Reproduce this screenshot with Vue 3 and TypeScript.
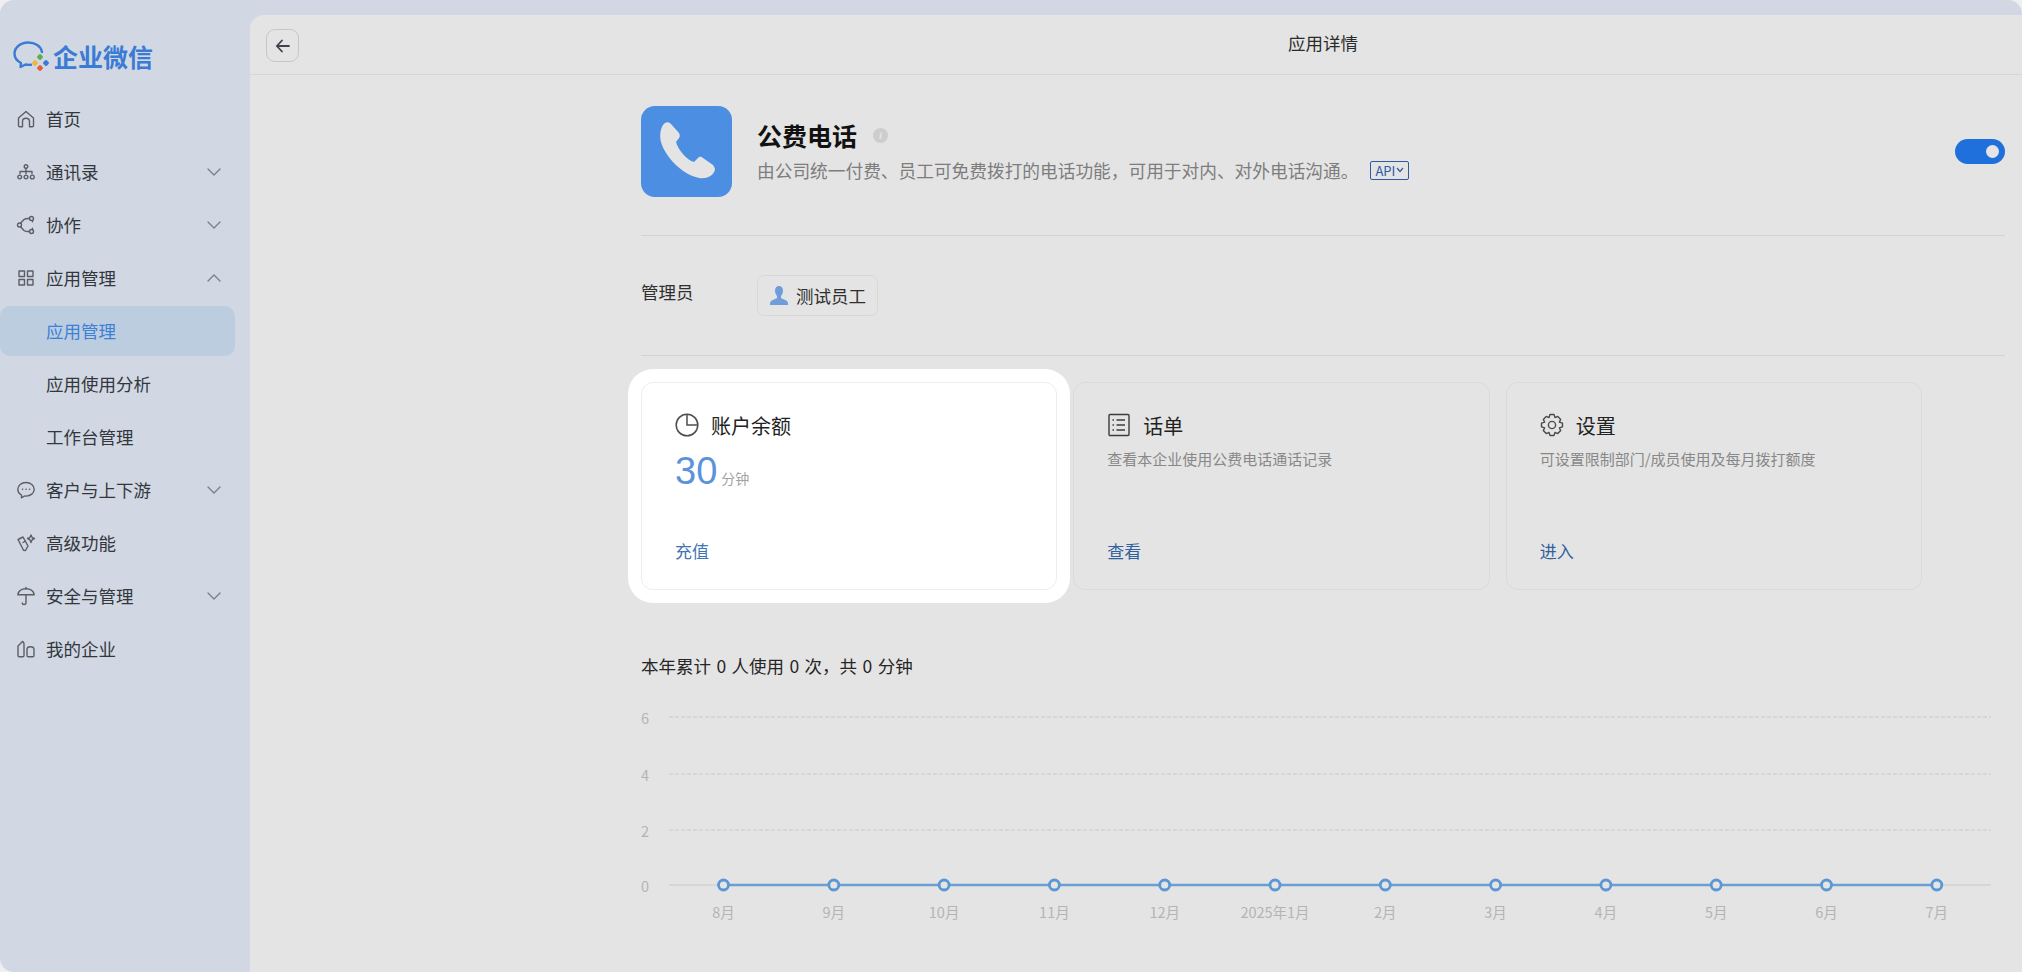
<template>
  <div class="shell">
    <aside class="sidebar">
      <div class="logo">
        <svg class="logo-icon" width="36" height="30" viewBox="0 0 36 30" fill="none">
          <path d="M29 11C28 5 22 1.500 15 1.500C7.500 1.500 1.500 6.500 1.500 12.500C1.500 16.500 4 20 8 22L7.500 26L12.500 23.500C14 23.800 16 24 18 23.800" stroke="#3a7bd5" stroke-width="2.400" stroke-linecap="round" stroke-linejoin="round" />
          <rect x="24.500" y="13.500" width="5" height="5" rx="1.500" transform="rotate(45 27 16)" fill="#5cb04a" />
          <rect x="19.500" y="19.500" width="5" height="5" rx="1.500" transform="rotate(45 22 22)" fill="#e9b93c" />
          <rect x="24.500" y="24.500" width="5" height="5" rx="1.500" transform="rotate(45 27 27)" fill="#dd6433" />
          <rect x="30.500" y="19.500" width="5" height="5" rx="1.500" transform="rotate(45 33 22)" fill="#3a7bd5" />
        </svg>
        <span class="logo-text">企业微信</span>
      </div>
      <nav>
        <div
          v-for="item in navItems"
          :key="item.label"
          class="nav-item"
          :class="{ active: item.active, sub: item.sub }"
        >
          <svg v-if="item.icon" class="nav-icon" width="20" height="20" viewBox="0 0 20 20" fill="none" stroke="#5a5f66" stroke-width="1.400" stroke-linejoin="round" stroke-linecap="round">
            <path v-for="d in icons[item.icon]" :key="d" :d="d" />
          </svg>
          <span class="nav-label">{{ item.label }}</span>
          <svg v-if="item.arrow" class="chevron" width="16" height="10" viewBox="0 0 16 10" fill="none" stroke="#7b8189" stroke-width="1.400" stroke-linecap="round" stroke-linejoin="round">
            <path :d="item.arrow === 'up' ? 'M2 8L8 2L14 8' : 'M2 2L8 8L14 2'" />
          </svg>
        </div>
      </nav>
    </aside>

    <main class="main">
      <header class="topbar">
        <button class="back" type="button">
          <svg width="16" height="14" viewBox="0 0 16 14" fill="none" stroke="#3f444b" stroke-width="1.800" stroke-linecap="round" stroke-linejoin="round">
            <path d="M14 7H2M7 1.500L1.800 7L7 12.500" />
          </svg>
        </button>
        <span class="topbar-title">应用详情</span>
      </header>

      <div class="content">
        <section class="app-head">
          <div class="app-logo">
            <svg width="91" height="91" viewBox="0 0 91 91">
              <path fill="#e4e4e4" d="M24 17C20 20 18 28 20 36C24 50 40 68 58 72C66 73 72 70 74 64C74 62 73 60 72 59L62 52C60 50 58 51 57 52L53 56C46 54 37 44 35 36L38 32C39 31 39 29 38 27L30 18C28 16 26 16 24 17Z" />
            </svg>
          </div>
          <div class="app-info">
            <div class="app-name">
              <span>公费电话</span>
              <i class="info-dot">i</i>
            </div>
            <div class="app-desc">
              <span>由公司统一付费、员工可免费拨打的电话功能，可用于对内、对外电话沟通。</span>
              <span class="api-tag">
                API
                <svg width="8" height="6" viewBox="0 0 8 6" fill="none" stroke="#2d5ca0" stroke-width="1.200"><path d="M1 1L4 4.500L7 1" /></svg>
              </span>
            </div>
          </div>
          <div class="switch"><span class="knob"></span></div>
        </section>

        <section class="admin">
          <span class="admin-label">管理员</span>
          <div class="admin-tag">
            <svg width="20" height="19" viewBox="0 0 20 19" fill="#6f9ddb">
              <path d="M10 0C7.500 0 6 2 6 4.500C6 7 7 9 8 10V12C6 13.500 1 14 1 17.500V19H19V17.500C19 14 14 13.500 12 12V10C13 9 14 7 14 4.500C14 2 12.500 0 10 0Z" />
            </svg>
            <span>测试员工</span>
          </div>
        </section>

        <section class="cards">
          <article class="card highlight">
            <div class="card-title">
              <svg width="24" height="24" viewBox="0 0 24 24" fill="none" stroke="#4d4d4d" stroke-width="1.500">
                <circle cx="12" cy="12" r="10.800" />
                <path d="M12 1.500V12H22.500" />
              </svg>
              <span>账户余额</span>
            </div>
            <div class="balance"><span class="balance-num">30</span><span class="balance-unit">分钟</span></div>
            <a class="card-action">充值</a>
          </article>
          <article class="card">
            <div class="card-title">
              <svg width="24" height="24" viewBox="0 0 24 24" fill="none" stroke="#3c3c3c" stroke-width="1.400">
                <rect x="2" y="1.500" width="20" height="21" rx="1" />
                <path d="M9.500 7H18M9.500 12H18M9.500 17H18" />
                <path d="M5.500 7H7M5.500 12H7M5.500 17H7" stroke-width="1.600" />
              </svg>
              <span>话单</span>
            </div>
            <p class="card-desc">查看本企业使用公费电话通话记录</p>
            <a class="card-action">查看</a>
          </article>
          <article class="card">
            <div class="card-title">
              <svg width="24" height="24" viewBox="0 0 24 24" fill="none" stroke="#4a4a4a" stroke-width="1.400" stroke-linejoin="round">
                <path d="M10 1.500H14L15 4.600L17.800 3.400L20.700 6.400L19.300 9.200L22.500 10.200V13.800L19.300 14.800L20.700 17.600L17.800 20.600L15 19.400L14 22.500H10L9 19.400L6.200 20.600L3.300 17.600L4.700 14.800L1.500 13.800V10.200L4.700 9.200L3.300 6.400L6.200 3.400L9 4.600Z" />
                <circle cx="12" cy="12" r="3.600" />
              </svg>
              <span>设置</span>
            </div>
            <p class="card-desc">可设置限制部门/成员使用及每月拨打额度</p>
            <a class="card-action">进入</a>
          </article>
        </section>

        <p class="summary">本年累计 0 人使用 0 次，共 0 分钟</p>

        <svg class="chart" width="1364" height="230" viewBox="0 0 1364 230">
          <g v-for="t in ticks" :key="t.label">
            <line x1="28" :x2="1350" :y1="t.y" :y2="t.y" stroke="#c8c8c8" stroke-width="1" :stroke-dasharray="t.label === '0' ? undefined : '4 2'" />
            <text x="0" :y="t.y + 7" class="axis-text">{{ t.label }}</text>
          </g>
          <line :x1="months[0].x" :x2="months[11].x" y1="186" y2="186" stroke="#6a9fd4" stroke-width="2.400" />
          <g v-for="m in months" :key="m.label">
            <circle :cx="m.x" cy="186" r="5" fill="#e4e4e4" stroke="#5b97d5" stroke-width="2.800" />
            <text :x="m.x" y="218.500" text-anchor="middle" class="axis-text">{{ m.label }}</text>
          </g>
        </svg>
      </div>
    </main>
  </div>
</template>

<script setup lang="ts">
interface NavItem {
  label: string
  icon?: string
  arrow?: 'up' | 'down'
  active?: boolean
  sub?: boolean
}

const navItems: NavItem[] = [
  { label: '首页', icon: 'home' },
  { label: '通讯录', icon: 'org', arrow: 'down' },
  { label: '协作', icon: 'collab', arrow: 'down' },
  { label: '应用管理', icon: 'apps', arrow: 'up' },
  { label: '应用管理', active: true, sub: true },
  { label: '应用使用分析', sub: true },
  { label: '工作台管理', sub: true },
  { label: '客户与上下游', icon: 'chat', arrow: 'down' },
  { label: '高级功能', icon: 'wand' },
  { label: '安全与管理', icon: 'umbrella', arrow: 'down' },
  { label: '我的企业', icon: 'company' },
]

const icons: Record<string, string[]> = {
  home: ['M2.500 9L10 2.500L17.500 9V16.500C17.500 17.300 17 17.800 16.200 17.800H13.500V12.500C13.500 10.500 12 9.200 10 9.200C8 9.200 6.500 10.500 6.500 12.500V17.800H3.800C3 17.800 2.500 17.300 2.500 16.500Z'],
  org: [
    'M8.200 4.500A1.800 1.800 0 1 0 11.800 4.500A1.800 1.800 0 1 0 8.200 4.500',
    'M4 11.500V9.500H16V11.500M10 6.500V11.500',
    'M1.800 15A1.900 1.900 0 1 0 5.600 15A1.900 1.900 0 1 0 1.800 15',
    'M8.100 15A1.900 1.900 0 1 0 11.900 15A1.900 1.900 0 1 0 8.100 15',
    'M14.400 15A1.900 1.900 0 1 0 18.200 15A1.900 1.900 0 1 0 14.400 15',
  ],
  collab: [
    'M1.500 10A2 2 0 1 0 5.500 10A2 2 0 1 0 1.500 10',
    'M13.500 3.500A2 2 0 1 0 17.500 3.500A2 2 0 1 0 13.500 3.500',
    'M13.500 16.500A2 2 0 1 0 17.500 16.500A2 2 0 1 0 13.500 16.500',
    'M4.500 8.300L8 4.500C9.500 3.500 11.500 3.300 13.500 3.500',
    'M4.500 11.700L8 15.500C9.500 16.500 11.500 16.700 13.500 16.500',
    'M16.500 5.500V6.800M16.500 13.200V14.500',
  ],
  apps: [
    'M3 3H8.500V8.500H3Z',
    'M11.500 3H17V8.500H11.500Z',
    'M3 11.500H8.500V17H3Z',
    'M11.500 11.500H17V17H11.500Z',
  ],
  chat: [
    'M10 2.500C5.300 2.500 1.800 5.500 1.800 9.300C1.800 11.800 3.200 13.800 5.500 15V17.800L8.500 16C9 16.100 9.500 16.100 10 16.100C14.700 16.100 18.200 13.100 18.200 9.300C18.200 5.500 14.700 2.500 10 2.500Z',
    'M6.500 9.300H6.700M10 9.300H10.200M13.500 9.300H13.700',
  ],
  wand: [
    'M2 6.500L7 4L12 13L9.500 17.500L7.500 17.300Z',
    'M7 9.500L9.500 8',
    'M15 2L16.300 4.700L18.500 5.500L16.300 6.500L15 9.500L13.700 6.500L11.500 5.500L13.700 4.700Z',
  ],
  umbrella: [
    'M1.800 8.800C2.500 5 6 2.800 10 2.800C14 2.800 17.500 5 18.200 8.800Z',
    'M10 1.500V2.800M10 8.800V16.500C10 18 9 18.500 8 18.500C7 18.500 6.300 18 6.300 17',
  ],
  company: [
    'M2 16.500V7L6.500 2.500C7.500 3 8 3.800 8 5V16.500C8 17.300 7.500 17.800 6.700 17.800H3.300C2.500 17.800 2 17.300 2 16.500Z',
    'M11 16.500V10.500C11 8.800 12.200 7.800 14.500 7.800C16.800 7.800 18 8.800 18 10.500V16.500C18 17.300 17.500 17.800 16.700 17.800H12.300C11.500 17.800 11 17.300 11 16.500Z',
  ],
}

const ticks = [
  { label: '6', y: 18 },
  { label: '4', y: 75 },
  { label: '2', y: 131 },
  { label: '0', y: 186 },
]

const monthNames = ['8月', '9月', '10月', '11月', '12月', '2025年1月', '2月', '3月', '4月', '5月', '6月', '7月']
const months = monthNames.map((label, i) => ({ label, x: 82.5 + i * 110.3 }))
</script>

<style>
html,
body {
  margin: 0;
  background: #efefef;
  overflow: hidden;
}
</style>

<style scoped>
.shell {
  display: flex;
  width: 2022px;
  height: 972px;
  overflow: hidden;
  background: #d1d8e3;
  border-radius: 14px 14px 0 14px;
  font-family: "Noto Sans CJK SC", "Liberation Sans", sans-serif;
  color: #2b2b2b;
}

.sidebar {
  width: 250px;
  flex-shrink: 0;
}

.logo {
  display: flex;
  align-items: center;
  height: 92px;
  padding: 20px 0 0 13px;
  box-sizing: border-box;
}

.logo-text {
  margin-left: 4px;
  font-size: 25px;
  font-weight: 700;
  color: #3a7bd5;
  line-height: 30px;
}

.nav-item {
  display: flex;
  align-items: center;
  height: 53px;
  width: 235px;
  padding-left: 16px;
  box-sizing: border-box;
  font-size: 17.500px;
  color: #33373d;
}

.nav-item.sub {
  padding-left: 46px;
}

.nav-item.active {
  height: 50px;
  margin: 1.500px 0;
  color: #3f7fd8;
  background: #bccde0;
  border-radius: 10px;
}

.nav-icon {
  margin-right: 10px;
  flex-shrink: 0;
}

.chevron {
  margin-left: auto;
  margin-right: 13px;
}

.main {
  flex: 1;
  margin-top: 15px;
  background: #e4e4e4;
  border-top-left-radius: 14px;
  min-width: 0;
}

.topbar {
  position: relative;
  display: flex;
  align-items: center;
  justify-content: center;
  height: 60px;
  padding: 0 17px 4px 391px;
  box-sizing: border-box;
  border-bottom: 1px solid #d6d6d6;
}

.back {
  position: absolute;
  left: 16px;
  top: 14px;
  width: 33px;
  height: 33px;
  padding: 0;
  display: flex;
  align-items: center;
  justify-content: center;
  background: transparent;
  border: 1px solid #c6c6c6;
  border-radius: 9px;
}

.topbar-title {
  font-size: 17.500px;
  color: #2b2b2b;
}

.content {
  padding: 31px 17px 0 391px;
}

.app-head {
  display: flex;
  padding-bottom: 38px;
  border-bottom: 1px solid #d2d2d2;
}

.app-logo {
  width: 91px;
  height: 91px;
  border-radius: 14px;
  background: #4c8ee2;
  flex-shrink: 0;
}

.app-info {
  margin-left: 25px;
  flex: 1;
}

.app-name {
  display: flex;
  align-items: center;
  margin-top: 11px;
  height: 36px;
  font-size: 25px;
  font-weight: 700;
  color: #111;
}

.info-dot {
  display: flex;
  align-items: center;
  justify-content: center;
  width: 15px;
  height: 15px;
  margin-left: 16px;
  border-radius: 50%;
  background: #cdcdcd;
  color: #e6e6e6;
  font-size: 11px;
  font-weight: 700;
  font-family: "Liberation Serif", serif;
}

.app-desc {
  display: flex;
  align-items: center;
  margin-top: 4px;
  height: 26px;
  font-size: 17.700px;
  color: #7d7d7d;
}

.api-tag {
  display: flex;
  align-items: center;
  justify-content: center;
  gap: 1px;
  width: 39px;
  height: 19px;
  margin-left: 12px;
  box-sizing: border-box;
  border: 1.500px solid #2d5ca0;
  border-radius: 2px;
  font-size: 13px;
  color: #2d5ca0;
}

.switch {
  display: flex;
  align-items: center;
  justify-content: flex-end;
  width: 50px;
  height: 25px;
  margin-top: 33px;
  padding-right: 6px;
  box-sizing: border-box;
  border-radius: 13px;
  background: #1f70dc;
}

.knob {
  width: 13px;
  height: 13px;
  border-radius: 50%;
  background: #e4e4e4;
}

.admin {
  display: flex;
  padding: 39px 0 39px;
  border-bottom: 1px solid #d2d2d2;
}

.admin-label {
  width: 116px;
  font-size: 17.500px;
  line-height: 34px;
  color: #2f2f2f;
}

.admin-tag {
  display: flex;
  align-items: center;
  gap: 7px;
  height: 41px;
  padding: 0 11px;
  box-sizing: border-box;
  border: 1px solid #d8d8d8;
  border-radius: 7px;
  font-size: 17.500px;
  color: #2f2f2f;
}

.cards {
  display: flex;
  gap: 16px;
  margin-top: 26px;
  padding-right: 83px;
}

.card {
  flex: 1;
  display: flex;
  flex-direction: column;
  height: 208px;
  padding: 27px 33px 0;
  box-sizing: border-box;
  border: 1px solid #dadada;
  border-radius: 12px;
}

.card.highlight {
  background: #fff;
  border-color: #ededed;
  box-shadow: 0 0 0 13px #fff;
}

.card-title {
  display: flex;
  align-items: center;
  gap: 12px;
  height: 30px;
  font-size: 20px;
  color: #222;
}

.balance {
  display: flex;
  align-items: baseline;
  gap: 4px;
  margin-top: 8px;
  height: 46px;
}

.balance-num {
  font-family: "Liberation Sans", sans-serif;
  font-size: 38px;
  line-height: 46px;
  color: #5a93dc;
}

.balance-unit {
  font-size: 14px;
  color: #a3a3a3;
}

.card-desc {
  margin: 7px 0 0;
  font-size: 15px;
  line-height: 24px;
  color: #888;
}

.card-action {
  margin-top: auto;
  margin-bottom: 25px;
  font-size: 17px;
  line-height: 26px;
  color: #2f5f9e;
}

.highlight .card-action {
  color: #4274b5;
}

.summary {
  margin: 63px 0 0;
  font-size: 17.500px;
  word-spacing: 1.500px;
  line-height: 26px;
  color: #262626;
}

.chart {
  display: block;
  margin-top: 20px;
}

.axis-text {
  font-size: 14.500px;
  fill: #b4b4b4;
  font-family: "Noto Sans CJK SC", "Liberation Sans", sans-serif;
}
</style>
